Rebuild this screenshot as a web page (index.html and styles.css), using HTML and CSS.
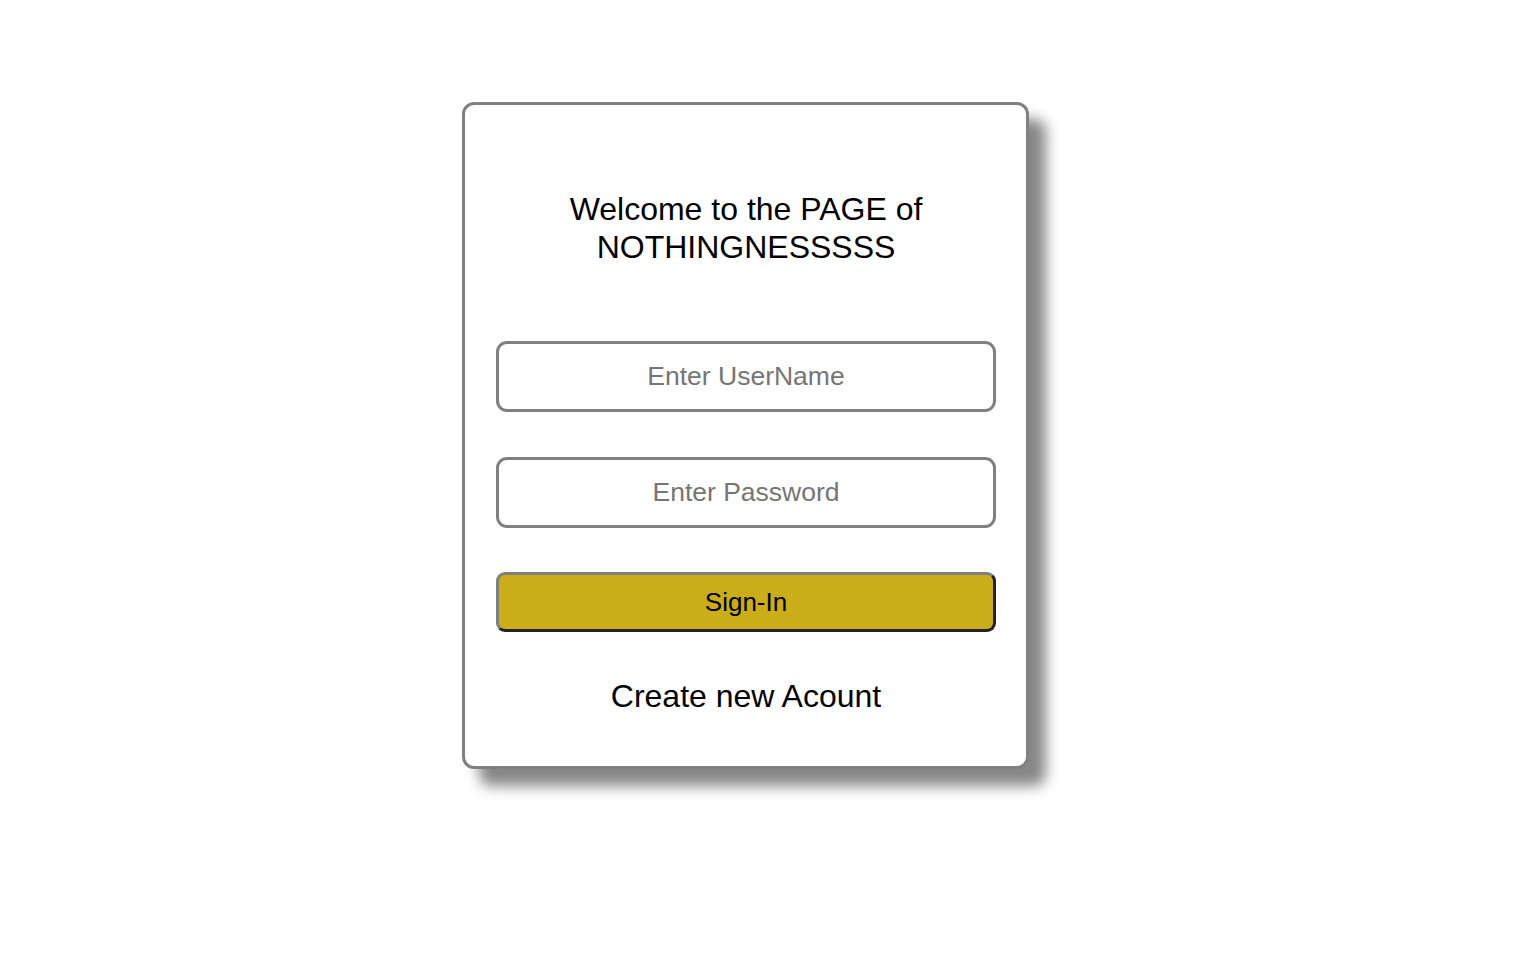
FILE: index.html
```html
<!DOCTYPE html>
<html lang="en">
<head>
<meta charset="utf-8">
<title>Sign In</title>
<link rel="stylesheet" href="styles.css">
</head>
<body>
  <main class="page">
    <form class="card" onsubmit="return false;">
      <h1 class="title">Welcome to the PAGE of NOTHINGNESSSSS</h1>
      <input class="field" type="text" placeholder="Enter UserName">
      <input class="field" type="password" placeholder="Enter Password">
      <button class="signin" type="submit">Sign-In</button>
      <p class="create">Create new Acount</p>
    </form>
  </main>
</body>
</html>
```

FILE: styles.css
```css
html, body {
  margin: 0;
  padding: 0;
  background: #ffffff;
}

body {
  font-family: "Liberation Sans", Arial, Helvetica, sans-serif;
  color: #000;
  min-height: 100vh;
}

.page {
  box-sizing: border-box;
  min-height: 100vh;
  padding: 102px 0 60px 462px;
}

.card {
  box-sizing: border-box;
  width: 567px;
  height: 667px;
  border: 3px solid #808080;
  border-radius: 12px;
  box-shadow: 17px 17px 14px #878787;
  background: #fff;
  display: flex;
  flex-direction: column;
  align-items: center;
  padding: 85px 30px 0 31px;
}

.title {
  margin: 0;
  width: 380px;
  font-size: 32px;
  font-weight: normal;
  line-height: 38px;
  text-align: center;
}

.field {
  box-sizing: border-box;
  width: 500px;
  height: 71px;
  border: 3px solid #808080;
  border-radius: 11px;
  margin-top: 75px;
  font-family: inherit;
  font-size: 26.5px;
  text-align: center;
  outline: none;
  background: #fff;
  padding: 0;
}

.field + .field {
  margin-top: 45px;
}

.field::placeholder {
  color: #757575;
}

.signin {
  box-sizing: border-box;
  width: 500px;
  height: 60px;
  margin-top: 44px;
  background: #caad19;
  border-style: solid;
  border-width: 3px;
  border-color: #808080 #222222 #222222 #808080;
  border-radius: 9px;
  font-family: inherit;
  font-size: 26px;
  color: #000;
  padding: 0;
}

.create {
  margin: 46px 0 0;
  font-size: 32px;
  line-height: 37px;
}
```
